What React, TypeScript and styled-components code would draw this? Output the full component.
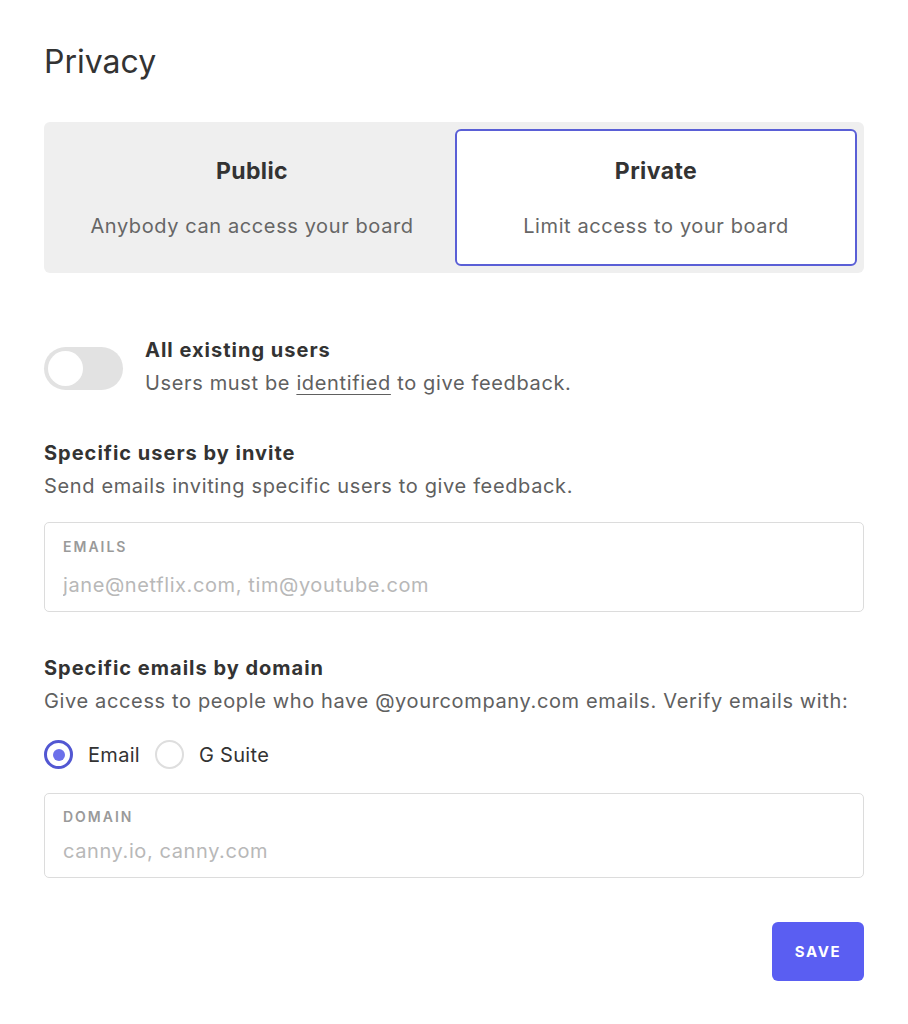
import React, { useState } from "react";
import styled, { createGlobalStyle } from "styled-components";

const GlobalStyle = createGlobalStyle`
  html, body { margin: 0; padding: 0; background: #ffffff; }
  body { font-family: Inter, "Noto Sans", "Liberation Sans", sans-serif; color: #333; }
  * { box-sizing: border-box; }
`;

const Page = styled.div`
  width: 908px;
  padding: 43px 44px 40px 44px;
  display: flex;
  flex-direction: column;
`;

const Title = styled.h1`
  margin: 0;
  font-size: 32px;
  line-height: 38px;
  font-weight: 400;
  color: #333;
`;

const Segment = styled.div`
  margin-top: 41px;
  background: #efefef;
  border-radius: 6px;
  padding: 7px;
  display: grid;
  grid-template-columns: 1fr 1fr;
  gap: 2px;
  height: 151px;
`;

const Option = styled.button<{ $active?: boolean }>`
  font-family: inherit;
  border: 2px solid ${(p) => (p.$active ? "#5a5fd6" : "transparent")};
  background: ${(p) => (p.$active ? "#ffffff" : "transparent")};
  border-radius: 6px;
  display: flex;
  flex-direction: column;
  align-items: center;
  padding: 25px 0 0 0;
  cursor: pointer;
`;

const OptionTitle = styled.div`
  font-size: 23px;
  line-height: 30px;
  font-weight: 700;
  letter-spacing: 0.4px;
  color: #333;
`;

const OptionDesc = styled.div`
  margin-top: 26px;
  font-size: 20px;
  line-height: 28px;
  color: #666;
  letter-spacing: 0.6px;
`;

const ToggleRow = styled.div`
  margin-top: 61px;
  display: flex;
  align-items: flex-start;
  gap: 22px;
`;

const Track = styled.div<{ $on?: boolean }>`
  margin-top: 13px;
  width: 79px;
  height: 43px;
  border-radius: 22px;
  background: ${(p) => (p.$on ? "#5a5fd6" : "#e2e2e2")};
  padding: 4px;
  display: flex;
  justify-content: ${(p) => (p.$on ? "flex-end" : "flex-start")};
  flex-shrink: 0;
  cursor: pointer;
`;

const Knob = styled.div`
  width: 35px;
  height: 35px;
  border-radius: 50%;
  background: #fff;
`;

const Block = styled.div<{ $top?: number }>`
  margin-top: ${(p) => p.$top ?? 0}px;
  display: flex;
  flex-direction: column;
`;

const Heading = styled.div`
  font-size: 20px;
  line-height: 33px;
  font-weight: 700;
  letter-spacing: 1px;
  color: #333;
`;

const Desc = styled.div`
  font-size: 20px;
  line-height: 33px;
  color: #606060;
  letter-spacing: 0.64px;
`;

const Link = styled.span`
  text-decoration: underline;
  text-underline-offset: 4px;
  text-decoration-thickness: 1px;
`;

const Field = styled.label<{ $top: number; $gap: number; $pt: number }>`
  margin-top: ${(p) => p.$top}px;
  border: 1px solid #dcdcdc;
  border-radius: 5px;
  padding: ${(p) => p.$pt}px 18px 14px 18px;
  display: flex;
  flex-direction: column;
  gap: ${(p) => p.$gap}px;
`;

const FieldLabel = styled.span`
  font-size: 14px;
  line-height: 16px;
  font-weight: 600;
  letter-spacing: 2px;
  color: #9a9a9a;
`;

const FieldInput = styled.input`
  border: none;
  outline: none;
  padding: 0;
  font-family: inherit;
  font-size: 20px;
  line-height: 24px;
  height: 24px;
  letter-spacing: 0.6px;
  color: #333;
  background: transparent;
  &::placeholder { color: #b8b8b8; }
`;

const RadioRow = styled.div`
  margin-top: 22px;
  display: flex;
  align-items: center;
  gap: 15px;
`;

const RadioItem = styled.label`
  display: flex;
  align-items: center;
  gap: 15px;
  cursor: pointer;
`;

const RadioCircle = styled.span<{ $checked?: boolean }>`
  width: 29px;
  height: 29px;
  border-radius: 50%;
  border: ${(p) => (p.$checked ? "3px solid #5257d2" : "2px solid #dedede")};
  display: flex;
  align-items: center;
  justify-content: center;
  &::after {
    content: "";
    width: 12px;
    height: 12px;
    border-radius: 50%;
    background: ${(p) => (p.$checked ? "#6c70ea" : "transparent")};
  }
`;

const RadioLabel = styled.span`
  font-size: 20px;
  line-height: 28px;
  letter-spacing: 0.3px;
  color: #333;
`;

const Footer = styled.div`
  margin-top: 44px;
  display: flex;
  justify-content: flex-end;
`;

const SaveButton = styled.button`
  width: 92px;
  height: 59px;
  border: none;
  border-radius: 6px;
  background: #5a5ef2;
  color: #fff;
  font-family: inherit;
  font-size: 15px;
  font-weight: 700;
  letter-spacing: 1.6px;
  cursor: pointer;
`;

export default function App() {
  const [mode, setMode] = useState<"public" | "private">("private");
  const [allUsers, setAllUsers] = useState(false);
  const [verify, setVerify] = useState<"email" | "gsuite">("email");

  return (
    <>
      <GlobalStyle />
      <Page>
        <Title>Privacy</Title>
        <Segment>
          <Option $active={mode === "public"} onClick={() => setMode("public")}>
            <OptionTitle>Public</OptionTitle>
            <OptionDesc>Anybody can access your board</OptionDesc>
          </Option>
          <Option $active={mode === "private"} onClick={() => setMode("private")}>
            <OptionTitle>Private</OptionTitle>
            <OptionDesc>Limit access to your board</OptionDesc>
          </Option>
        </Segment>

        <ToggleRow>
          <Track $on={allUsers} onClick={() => setAllUsers(!allUsers)}>
            <Knob />
          </Track>
          <Block>
            <Heading>All existing users</Heading>
            <Desc>
              Users must be <Link>identified</Link> to give feedback.
            </Desc>
          </Block>
        </ToggleRow>

        <Block $top={37}>
          <Heading>Specific users by invite</Heading>
          <Desc>Send emails inviting specific users to give feedback.</Desc>
        </Block>

        <Field $top={19} $gap={18} $pt={16}>
          <FieldLabel>EMAILS</FieldLabel>
          <FieldInput placeholder="jane@netflix.com, tim@youtube.com" />
        </Field>

        <Block $top={40}>
          <Heading>Specific emails by domain</Heading>
          <Desc>Give access to people who have @yourcompany.com emails. Verify emails with:</Desc>
        </Block>

        <RadioRow>
          <RadioItem onClick={() => setVerify("email")}>
            <RadioCircle $checked={verify === "email"} />
            <RadioLabel>Email</RadioLabel>
          </RadioItem>
          <RadioItem onClick={() => setVerify("gsuite")}>
            <RadioCircle $checked={verify === "gsuite"} />
            <RadioLabel>G Suite</RadioLabel>
          </RadioItem>
        </RadioRow>

        <Field $top={24} $gap={14} $pt={15}>
          <FieldLabel>DOMAIN</FieldLabel>
          <FieldInput placeholder="canny.io, canny.com" />
        </Field>

        <Footer>
          <SaveButton>SAVE</SaveButton>
        </Footer>
      </Page>
    </>
  );
}
